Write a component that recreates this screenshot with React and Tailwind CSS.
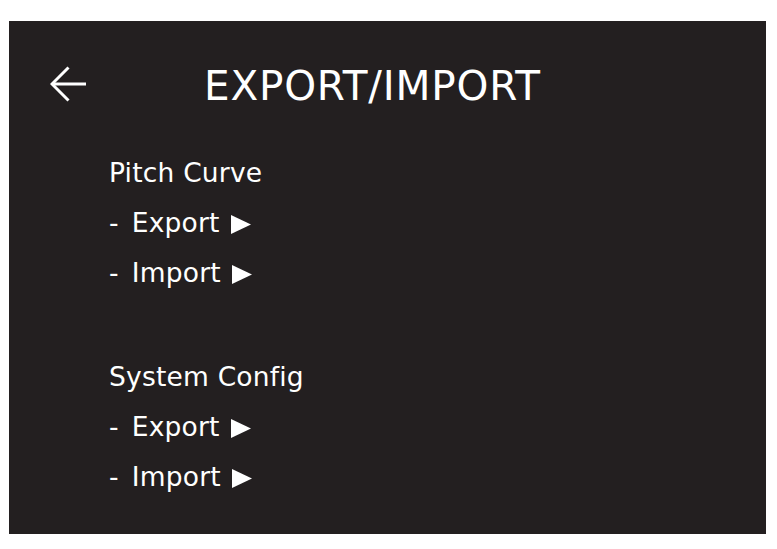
import React from "react";

// Petite flèche "play" après chaque action
function Play() {
  return (
    <svg width="20" height="19" viewBox="0 0 20 19" className="ml-[11px] mt-[2px]">
      <polygon points="0,0 20,9.5 0,19" fill="#ffffff" />
    </svg>
  );
}

function Action({ label }) {
  return (
    <div className="flex items-center h-[50px]">
      <span>-</span>
      <span className="ml-[13px]">{label}</span>
      <Play />
    </div>
  );
}

function Section({ title }) {
  return (
    <div>
      <div className="h-[50px] leading-[50px]">{title}</div>
      <Action label="Export" />
      <Action label="Import" />
    </div>
  );
}

export default function App() {
  return (
    <div className="bg-white w-[777px] h-[549px] pt-[21px] pl-[9px] font-['DejaVu_Sans',sans-serif]">
      <div className="w-[757px] h-[513px] bg-[#231f20] text-white pt-[35px]">
        {/* En-tête */}
        <div className="flex items-center h-[60px]">
          <svg width="38" height="38" viewBox="0 0 38 38" className="ml-[41px] mt-[-4px]">
            <path d="M2 19H36" stroke="#ffffff" strokeWidth="3" fill="none" />
            <path d="M18.5 2.5L2 19L18.5 35.5" stroke="#ffffff" strokeWidth="3" fill="none" />
          </svg>
          <h1 className="ml-[116px] text-[40.5px] tracking-[0.8px] leading-[60px]">EXPORT/IMPORT</h1>
        </div>

        {/* Contenu */}
        <div className="mt-[32px] ml-[100px] text-[26.5px] tracking-[0.2px] leading-[50px] flex flex-col gap-[54px]">
          <Section title="Pitch Curve" />
          <Section title="System Config" />
        </div>
      </div>
    </div>
  );
}
